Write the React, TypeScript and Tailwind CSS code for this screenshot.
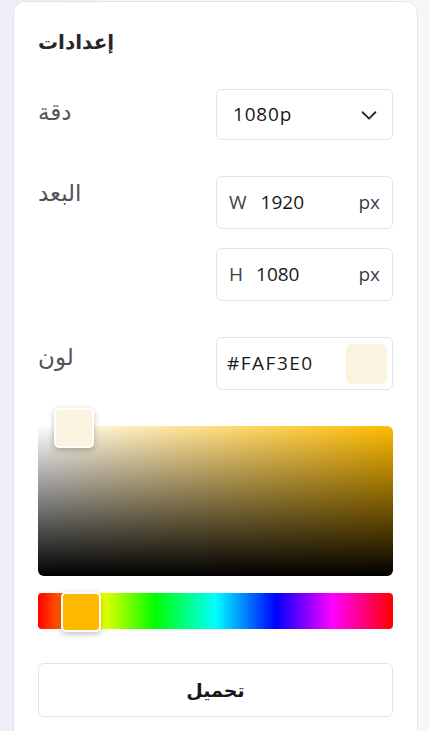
import React from "react";

const latin = { fontFamily: '"Open Sans", "Noto Sans", sans-serif' };
const arabic = { fontFamily: '"DejaVu Sans", "Noto Sans", sans-serif' };

export default function App() {
  const hue = "#FFBB00";
  return (
    <div className="min-h-[731px] w-[430px] bg-gradient-to-r from-[#eeeef8] via-[#f6f6f9] to-[#f7f7f8] pl-[13px] pr-[12px] pt-px" style={latin}>
      <div className="rounded-t-xl border border-[#e4e4e7] bg-white px-6 pb-6 pt-[26px]">
        <h2 className="text-[20px] font-bold leading-7 text-[#27272a]" style={arabic}>إعدادات</h2>

        <div className="mt-[33px] flex items-start justify-between">
          <div className="pt-[8px] text-[23px] leading-[30px] text-[#52525b]" style={arabic}>دقة</div>
          <div className="flex h-[51px] w-[177px] items-center justify-between rounded-md border border-[#e4e4e7] pl-4 pr-3">
            <span className="text-[19px] tracking-[0.8px] text-[#18181b]">1080p</span>
            <svg width="22" height="22" viewBox="0 0 24 24" fill="none" stroke="#27272a" strokeWidth="2" strokeLinecap="round" strokeLinejoin="round">
              <path d="m5 9 7 7 7-7" />
            </svg>
          </div>
        </div>

        <div className="mt-9 flex items-start justify-between">
          <div className="pt-[2px] text-[23px] leading-[30px] text-[#52525b]" style={arabic}>البعد</div>
          <div className="flex w-[177px] flex-col gap-[19px]">
            <div className="flex h-[53px] items-center justify-between rounded-md border border-[#e4e4e7] pl-3 pr-3">
              <div className="flex items-center gap-[14px] text-[19px]">
                <span className="text-[#3f3f46]">W</span>
                <span className="text-[#18181b]">1920</span>
              </div>
              <span className="text-[19px] text-[#3f3f46]">px</span>
            </div>
            <div className="flex h-[53px] items-center justify-between rounded-md border border-[#e4e4e7] pl-3 pr-3">
              <div className="flex items-center gap-[13px] text-[19px]">
                <span className="text-[#3f3f46]">H</span>
                <span className="text-[#18181b]">1080</span>
              </div>
              <span className="text-[19px] text-[#3f3f46]">px</span>
            </div>
          </div>
        </div>

        <div className="mt-9 flex items-start justify-between">
          <div className="pt-[5px] text-[23px] leading-[30px] text-[#52525b]" style={arabic}>لون</div>
          <div className="flex h-[53px] w-[177px] items-center justify-between rounded-md border border-[#e4e4e7] pl-[10px] pr-[5px]">
            <span className="text-[19px] tracking-[1.5px] text-[#18181b]">#FAF3E0</span>
            <div className="h-[40px] w-[41px] rounded-md bg-[#FAF3E0]" />
          </div>
        </div>

        <div className="relative mt-[36px]">
          <div className="relative h-[150px] w-full overflow-hidden rounded-md" style={{ backgroundColor: hue }}>
            <div className="absolute inset-0 bg-gradient-to-r from-white to-transparent" />
            <div className="absolute inset-0 bg-gradient-to-b from-transparent to-black" />
          </div>
          <div className="absolute left-[16px] top-[-18px] h-[40px] w-[40px] rounded-[5px] border-2 border-white bg-[#FAF3E0] shadow-[0_2px_6px_rgba(0,0,0,0.25)]" />
        </div>

        <div className="relative mt-[17px]">
          <div className="h-[36px] w-full rounded-[4px] bg-[linear-gradient(to_right,#ff0000_0%,#ffff00_17%,#00ff00_33%,#00ffff_50%,#0000ff_67%,#ff00ff_83%,#ff0000_100%)]" />
          <div className="absolute left-[23px] top-[-1px] h-[40px] w-[40px] rounded-[5px] border-2 border-white bg-[#FFB800] shadow-[0_2px_6px_rgba(0,0,0,0.25)]" />
        </div>

        <button className="mt-[34px] flex h-[54px] w-full items-center justify-center rounded-md border border-[#e4e4e7] bg-white text-[19px] font-bold text-[#18181b]" style={arabic}>
          تحميل
        </button>
      </div>
    </div>
  );
}
